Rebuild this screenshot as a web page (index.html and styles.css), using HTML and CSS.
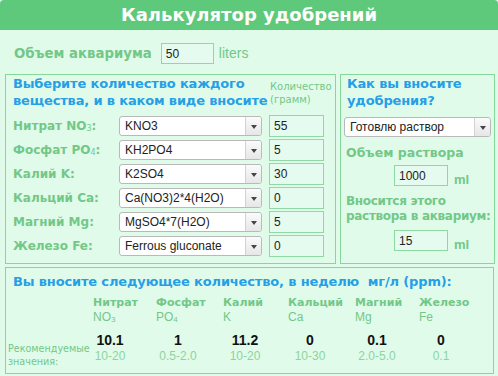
FILE: index.html
```html
<!DOCTYPE html>
<html lang="ru">
<head>
    <meta charset="UTF-8">
    <title>Калькулятор удобрений</title>
    <link rel="stylesheet" href="styles.css">
</head>
<body>
    <div class="calc">
        <div class="calc-title">Калькулятор удобрений</div>

        <div class="volume">
            <span class="volume-label">Объем аквариума</span>
            <input class="field field-volume" type="text" value="50">
            <span class="unit unit-liters">liters</span>
        </div>

        <div class="panels">
            <div class="panel panel-left">
                <div class="panel-heading">Выберите количество каждого<br>вещества, и в каком виде вносите</div>
                <div class="amount-head">Количество (грамм)</div>

                <div class="row-label">Нитрат NO<sub>3</sub>:</div>
                <div class="select"><span>KNO3</span><i class="select-arrow"></i></div>
                <input class="field" type="text" value="55">

                <div class="row-label">Фосфат PO<sub>4</sub>:</div>
                <div class="select"><span>KH2PO4</span><i class="select-arrow"></i></div>
                <input class="field" type="text" value="5">

                <div class="row-label">Калий K:</div>
                <div class="select"><span>K2SO4</span><i class="select-arrow"></i></div>
                <input class="field" type="text" value="30">

                <div class="row-label">Кальций Ca:</div>
                <div class="select"><span>Ca(NO3)2*4(H2O)</span><i class="select-arrow"></i></div>
                <input class="field" type="text" value="0">

                <div class="row-label">Магний Mg:</div>
                <div class="select"><span>MgSO4*7(H2O)</span><i class="select-arrow"></i></div>
                <input class="field" type="text" value="5">

                <div class="row-label">Железо Fe:</div>
                <div class="select"><span>Ferrous gluconate</span><i class="select-arrow"></i></div>
                <input class="field" type="text" value="0">
            </div>

            <div class="panel panel-right">
                <div class="panel-heading">Как вы вносите<br>удобрения?</div>
                <div class="select select-wide"><span>Готовлю раствор</span><i class="select-arrow"></i></div>

                <div class="sub-label">Объем раствора</div>
                <div class="solution-row">
                    <input class="field field-solution" type="text" value="1000">
                    <span class="unit">ml</span>
                </div>

                <div class="sub-label sub-label-two">Вносится этого<br>раствора в аквариум:</div>
                <div class="solution-row solution-row-last">
                    <input class="field field-solution" type="text" value="15">
                    <span class="unit">ml</span>
                </div>
            </div>
        </div>

        <div class="panel result">
            <div class="panel-heading result-heading">Вы вносите следующее количество, в неделю&nbsp; мг/л (ppm):</div>
            <div class="result-grid">
                <div class="result-spacer"></div>
                <div class="col-head">Нитрат<span>NO<sub>3</sub></span></div>
                <div class="col-head">Фосфат<span>PO<sub>4</sub></span></div>
                <div class="col-head">Калий<span>K</span></div>
                <div class="col-head">Кальций<span>Ca</span></div>
                <div class="col-head">Магний<span>Mg</span></div>
                <div class="col-head">Железо<span>Fe</span></div>

                <div class="result-label">Рекомендуемые значения:</div>

                <div class="value value-first">10.1</div>
                <div class="value">1</div>
                <div class="value">11.2</div>
                <div class="value">0</div>
                <div class="value">0.1</div>
                <div class="value">0</div>

                <div class="norm norm-first">10-20</div>
                <div class="norm">0.5-2.0</div>
                <div class="norm">10-20</div>
                <div class="norm">10-30</div>
                <div class="norm">2.0-5.0</div>
                <div class="norm">0.1</div>
            </div>
        </div>
    </div>
</body>
</html>
```

FILE: styles.css
```css
body {
    margin: 0;
    background-color: #e1fbeb;
    font-family: "DejaVu Sans", Verdana, sans-serif;
    color: #72c886;
}
.calc {
    width: 498px;
}
.calc-title {
    height: 30px;
    line-height: 30px;
    background-color: #5ec97a;
    border-radius: 4px 4px 0 0;
    color: #ffffff;
    font-size: 18px;
    font-weight: bold;
    text-align: center;
}

/* объем аквариума */
.volume {
    display: flex;
    align-items: baseline;
    padding: 13px 0 10px 14px;
}
.volume-label {
    font-size: 13.3px;
    font-weight: bold;
    margin-right: 9px;
}
.unit {
    font-family: "Liberation Sans", Arial, sans-serif;
    font-size: 13px;
    font-weight: bold;
    margin-left: 6px;
}
.unit-liters {
    font-weight: normal;
    font-size: 14px;
    margin-left: 5px;
}

.field {
    box-sizing: border-box;
    height: 22px;
    margin: 0;
    padding: 0 4px;
    border: 1px solid #8fd9a2;
    background-color: #e6fbef;
    font-family: "Liberation Sans", Arial, sans-serif;
    font-size: 12px;
    color: #222222;
    outline: none;
}
.field-volume {
    width: 53px;
    height: 21px;
}

.panels {
    display: flex;
    gap: 4px;
    padding-left: 5px;
}
.panel {
    border: 1px solid #86d79a;
}
.panel-heading {
    color: #259fe6;
    font-size: 13px;
    font-weight: bold;
    line-height: 17px;
    letter-spacing: -0.15px;
    white-space: nowrap;
}

/* левая колонка */
.panel-left {
    width: 311px;
    display: grid;
    grid-template-columns: 106px 143px 62px;
    grid-template-rows: 38px;
    grid-auto-rows: 22px;
    row-gap: 2px;
    padding: 0 11px 6px 7px;
    align-items: center;
}
.panel-left .panel-heading {
    grid-column: 1 / 3;
    grid-row: 1;
    align-self: start;
}
.panel-left .field {
    margin-left: 7px;
    width: 55px;
}
.amount-head {
    grid-column: 3;
    grid-row: 1;
    align-self: start;
    margin: 5px 0 0 8px;
    font-size: 10px;
    line-height: 13px;
}
.row-label {
    font-size: 12px;
    font-weight: bold;
    white-space: nowrap;
}
sub {
    font-size: 8px;
    line-height: 0;
    vertical-align: -1px;
    font-weight: normal;
}

.select {
    box-sizing: border-box;
    height: 20px;
    display: flex;
    align-items: center;
    background-color: #ffffff;
    border: 1px solid #b9b9b9;
    border-radius: 3px;
    font-family: "Liberation Sans", Arial, sans-serif;
    font-size: 12px;
    color: #222222;
}
.select span {
    flex: 1;
    padding-left: 5px;
    white-space: nowrap;
    overflow: hidden;
}
.select-arrow {
    width: 15px;
    height: 18px;
    border-left: 1px solid #d2d2d2;
    background: linear-gradient(#fbfbfb, #e6e6e6);
    border-radius: 0 3px 3px 0;
    position: relative;
}
.select-arrow::after {
    content: "";
    position: absolute;
    left: 5px;
    top: 8px;
    border-left: 3px solid transparent;
    border-right: 3px solid transparent;
    border-top: 4px solid #444444;
}

/* правая колонка */
.panel-right {
    width: 147px;
    padding: 0 3px;
}
.panel-right .panel-heading {
    padding-left: 3px;
    height: 34px;
}
.select-wide {
    margin-top: 8px;
}
.sub-label {
    font-size: 12.5px;
    font-weight: bold;
    line-height: 17px;
    padding-left: 2px;
    margin-top: 7px;
    white-space: nowrap;
}
.sub-label-two {
    font-size: 12px;
    letter-spacing: -0.3px;
    line-height: 15px;
    margin-top: 8px;
}
.solution-row {
    display: flex;
    align-items: flex-end;
    padding-left: 50px;
    margin-top: 4px;
}
.solution-row-last {
    margin-top: 6px;
}
.field-solution {
    width: 54px;
    height: 21px;
}
.solution-row .unit {
    margin-left: 6px;
    margin-bottom: -1px;
}

/* результат */
.result {
    margin: 3px 4px 0 5px;
    padding: 5px 0 9px 2px;
}
.result-heading {
    padding-left: 5px;
}
.result-grid {
    display: grid;
    grid-template-columns: 85px 63px 67px 65px 67px 64px 64px;
    grid-template-rows: 37px 16px 16px;
    margin-top: 5px;
}
.result-label {
    grid-column: 1;
    grid-row: 2 / 4;
    align-self: end;
    margin-bottom: -4px;
    font-size: 9.6px;
    line-height: 13px;
}
.col-head {
    font-size: 11px;
    font-weight: bold;
    line-height: 15px;
}
.col-head span {
    display: block;
    font-family: "Liberation Sans", Arial, sans-serif;
    font-size: 12px;
    font-weight: normal;
}
.value {
    grid-row: 2;
    width: 44px;
    text-align: center;
    font-family: "Liberation Sans", Arial, sans-serif;
    font-size: 14px;
    font-weight: bold;
    line-height: 16px;
    color: #111111;
}
.norm {
    grid-row: 3;
    width: 44px;
    text-align: center;
    font-family: "Liberation Sans", Arial, sans-serif;
    font-size: 12px;
    line-height: 16px;
    color: #8dd49d;
}
.value-first,
.norm-first {
    width: 34px;
}
```
